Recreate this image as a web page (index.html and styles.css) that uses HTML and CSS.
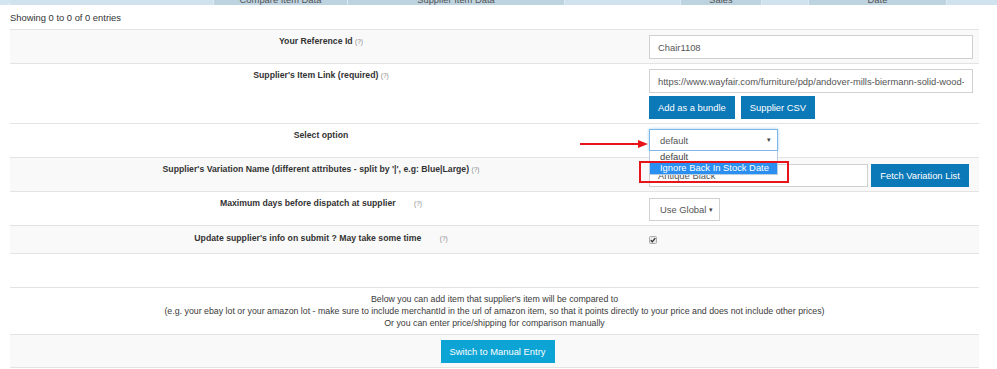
FILE: index.html
```html
<!DOCTYPE html>
<html lang="en">
<head>
    <meta charset="UTF-8">
    <title>Supplier Item</title>
    <link rel="stylesheet" href="styles.css">
</head>
<body>

    <!-- table header, scrolled almost out of view -->
    <div class="head-strip">
        <div class="corner"></div>
        <div class="head-cell light w203"></div>
        <div class="head-cell dark w134">Compare Item Data</div>
        <div class="head-cell dark w217">Supplier Item Data</div>
        <div class="head-cell light w116"></div>
        <div class="head-cell dark w81">Sales</div>
        <div class="head-cell light w47"></div>
        <div class="head-cell dark w138">Date</div>
        <div class="head-cell light grow"></div>
    </div>

    <div class="info">Showing 0 to 0 of 0 entries</div>

    <div class="form-table">
        <div class="row striped">
            <div class="label">Your Reference Id <span class="hint">(?)</span></div>
            <div class="value">
                <input class="text-input wide" type="text" value="Chair1108">
            </div>
        </div>

        <div class="row">
            <div class="label">Supplier's Item Link (required) <span class="hint">(?)</span></div>
            <div class="value">
                <input class="text-input wide" type="text" value="https://www.wayfair.com/furniture/pdp/andover-mills-biermann-solid-wood-dining-chair">
                <div class="btn-line">
                    <button class="btn btn-primary">Add as a bundle</button>
                    <button class="btn btn-primary">Supplier CSV</button>
                </div>
            </div>
        </div>

        <div class="row">
            <div class="label">Select option</div>
            <div class="value">
                <div class="select-wrap">
                    <div class="select focused w129">
                        <span>default</span>
                        <span class="caret">&#9662;</span>
                    </div>
                    <!-- open option list -->
                    <div class="dropdown">
                        <div class="option">default</div>
                        <div class="option selected">Ignore Back In Stock Date</div>
                    </div>
                    <!-- annotation -->
                    <svg class="note-arrow" width="68" height="10" viewBox="0 0 68 10">
                        <line x1="0" y1="5" x2="60" y2="5" stroke="#e8141c" stroke-width="2"/>
                        <polygon points="58,1 68,5 58,9" fill="#e8141c"/>
                    </svg>
                    <div class="note-box"></div>
                </div>
            </div>
        </div>

        <div class="row striped">
            <div class="label">Supplier's Variation Name (different attributes - split by '|', e.g: Blue|Large) <span class="hint">(?)</span></div>
            <div class="value inline">
                <input class="text-input w219" type="text" value="Antique Black">
                <button class="btn btn-primary">Fetch Variation List</button>
            </div>
        </div>

        <div class="row">
            <div class="label">Maximum days before dispatch at supplier <span class="hint far">(?)</span></div>
            <div class="value">
                <div class="select w71">
                    <span>Use Global</span>
                    <span class="caret">&#9662;</span>
                </div>
            </div>
        </div>

        <div class="row striped short">
            <div class="label">Update supplier's info on submit ? May take some time <span class="hint far">(?)</span></div>
            <div class="value">
                <svg class="check" width="8" height="8" viewBox="0 0 8 8">
                    <rect x="0.5" y="0.5" width="7" height="7" rx="1" fill="#e9e9e9" stroke="#aaa"/>
                    <path d="M1.8 4.2 L3.3 5.7 L6.3 2.2" fill="none" stroke="#333" stroke-width="1.3"/>
                </svg>
            </div>
        </div>

        <div class="row empty"></div>

        <div class="row full">
            <p class="note">
                Below you can add item that supplier's item will be compared to<br>
                (e.g. your ebay lot or your amazon lot - make sure to include merchantId in the url of amazon item, so that it points directly to your price and does not include other prices)<br>
                Or you can enter price/shipping for comparison manually
            </p>
        </div>

        <div class="row full striped">
            <div class="center">
                <button class="btn btn-info">Switch to Manual Entry</button>
            </div>
        </div>
    </div>

</body>
</html>
```

FILE: styles.css
```css
body {
    margin: 0;
    padding: 0;
    background: #fff;
    font-family: 'Liberation Sans', Arial, sans-serif;
    font-size: 9.4px;
    color: #333;
}

/* header strip */
.head-strip {
    display: flex;
    height: 5px;
    overflow: hidden;
}

.corner {
    width: 10px;
    height: 7px;
    background: #d3e5f0;
    border-bottom-right-radius: 5px;
}

.head-cell {
    height: 5px;
    line-height: 0;
    text-align: center;
    color: #555;
    border-right: 1px solid #dbe9f2;
    box-sizing: border-box;
}

.head-cell.light { background: #cfe2ee; }
.head-cell.dark { background: #bdd3e0; }

.w203 { width: 204px; }
.w134 { width: 134px; }
.w217 { width: 217px; }
.w116 { width: 116px; }
.w81 { width: 81px; }
.w47 { width: 47px; }
.w138 { width: 138px; }
.grow { flex: 1; border-right: none; }

.info {
    padding: 6px 10px 5px;
    line-height: 13px;
}

/* form table */
.form-table {
    margin: 0 18px 0 10px;
    border-bottom: 1px solid #e3e3e3;
}

.row {
    display: grid;
    grid-template-columns: 622px 1fr;
    border-top: 1px solid #e3e3e3;
}

.row.striped { background: #f9f9f9; }

.label {
    padding: 5px 4px;
    line-height: 13px;
    text-align: center;
    font-weight: bold;
    font-size: 8.7px;
    color: #333;
}

.hint {
    font-weight: normal;
    font-size: 6.5px;
    color: #888;
}

.hint.far { margin-left: 16px; }

.value {
    padding: 5px 6px 4px 17px;
}

.value.inline {
    display: flex;
    gap: 3px;
}

.row.short .label { padding: 6px 4px 8px; }
.row.short .value { padding-top: 10px; }

.row.empty { height: 33px; }

.row.full { grid-template-columns: 1fr; }

.note {
    margin: 0;
    padding: 5px 0;
    line-height: 12px;
    text-align: center;
    font-size: 8.8px;
    color: #3a3a3a;
}

.center {
    padding: 5px 0 4px 6px;
    text-align: center;
}

/* controls */
.text-input {
    box-sizing: border-box;
    height: 24px;
    padding: 0 8px;
    border: 1px solid #d0d0d0;
    background: #fff;
    font-family: inherit;
    font-size: 9.4px;
    color: #555;
    outline: none;
}

.text-input.wide { width: 100%; }
.text-input.w219 { width: 219px; height: 23px; margin-top: 1px; }

.btn-line {
    display: flex;
    gap: 6px;
    margin-top: 3px;
}

.btn {
    height: 23px;
    padding: 0 9px;
    border: none;
    color: #fff;
    font-family: inherit;
    font-size: 9.4px;
    cursor: pointer;
}

.value.inline .btn { margin-top: 1px; width: 98px; padding: 0; }

.btn-primary { background: #0b78b8; }
.btn-info { background: #0ca4d4; width: 114px; padding: 0; }

.select-wrap {
    position: relative;
    width: 129px;
    margin-bottom: 2px;
}

.select {
    box-sizing: border-box;
    height: 23px;
    display: flex;
    align-items: center;
    justify-content: space-between;
    padding: 0 6px 0 10px;
    border: 1px solid #d0d0d0;
    background: #fff;
    color: #555;
}

.select.w129 { width: 129px; height: 22px; }
.select.w71 { width: 71px; margin-top: 1px; }

.select.focused {
    border-color: #7fb8e6;
    box-shadow: 0 0 3px rgba(102, 175, 233, 0.6);
}

.caret {
    font-size: 7px;
    color: #444;
}

.dropdown {
    position: absolute;
    top: 22px;
    left: 0;
    width: 129px;
    box-sizing: border-box;
    border: 1px solid #b8cfe3;
    border-top: none;
    background: #fff;
    z-index: 2;
}

.option {
    height: 11px;
    line-height: 11px;
    padding-left: 10px;
    color: #444;
}

.option.selected {
    height: 12px;
    line-height: 12px;
    background: #2a8ff0;
    color: #fff;
}

.note-arrow {
    position: absolute;
    left: -69px;
    top: 10px;
}

.note-box {
    position: absolute;
    left: -10px;
    top: 32px;
    width: 150px;
    height: 22px;
    box-sizing: border-box;
    border: 2px solid #e8141c;
    z-index: 3;
}

.check { display: block; }
```
